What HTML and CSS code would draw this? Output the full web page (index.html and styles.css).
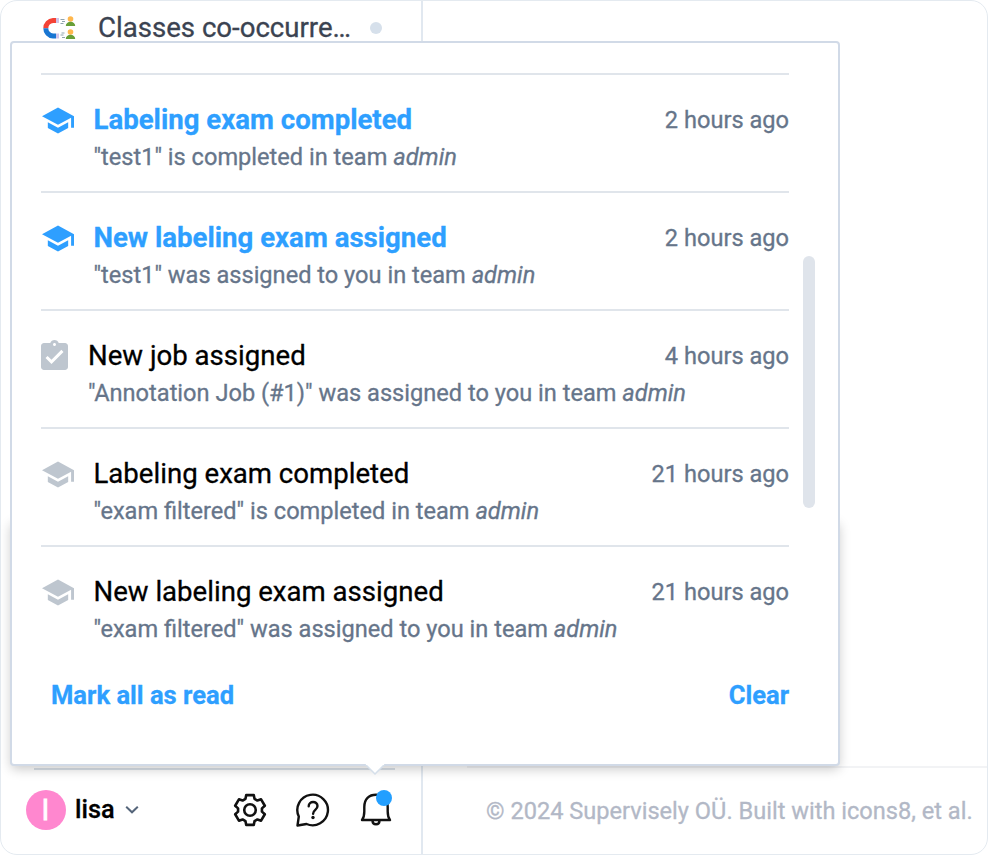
FILE: index.html
```html
<!DOCTYPE html>
<html lang="en">
<head>
<meta charset="utf-8">
<title>Notifications</title>
<link rel="stylesheet" href="styles.css">
</head>
<body>
<svg class="defs" width="0" height="0" aria-hidden="true">
  <symbol id="school" viewBox="1 3 22 18"><path d="M5 13.18v4L12 21l7-3.82v-4L12 17l-7-3.82zM12 3L1 9l11 6 9-4.91V17h2V9L12 3z"/></symbol>
  <symbol id="task" viewBox="3 1 18 20"><path d="M19 3h-4.18C14.4 1.84 13.3 1 12 1c-1.3 0-2.4.84-2.82 2H5c-1.1 0-2 .9-2 2v14c0 1.1.9 2 2 2h14c1.1 0 2-.9 2-2V5c0-1.1-.9-2-2-2zm-7 0c.55 0 1 .45 1 1s-.45 1-1 1-1-.45-1-1 .45-1 1-1zm-2 14l-4-4 1.41-1.41L10 14.17l6.59-6.59L18 9l-8 8z"/></symbol>
</svg>
<div class="frame">
  <aside class="sidebar">
    <div class="app">
      <svg class="app-icon" width="34" height="26" viewBox="0 0 34 26">
        <path d="M14 5.500H11A7.600 7.600 0 0 0 3.800 13.200" fill="none" stroke="#f44336" stroke-width="5"/>
        <path d="M14 21H11A7.600 7.600 0 0 1 3.800 13.200" fill="none" stroke="#1976d2" stroke-width="5"/>
        <path d="M14 3h3v5h-3zM14 18.500h3v5h-3z" fill="#d1c4e9"/>
        <path d="M18.500 4.500h4M20 6.500h3M18.500 8.500h3M19.500 18h3M18.500 20h3M20 22.500h3" stroke="#90a4ae" stroke-width="1"/>
        <circle cx="28.500" cy="4" r="2.800" fill="#ffb74d"/><circle cx="28.500" cy="17" r="2.800" fill="#ffb74d"/>
        <path d="M23.800 11a4.700 4.200 0 0 1 9.400 0zM23.800 24a4.700 4.200 0 0 1 9.400 0z" fill="#689f38"/>
      </svg>
      <span class="app-name">Classes co-occurre…</span>
      <span class="app-dot"></span>
    </div>
    <div class="user-bar">
      <span class="avatar">l</span>
      <span class="user-name">lisa</span>
      <svg class="chevron" width="14" height="10" viewBox="0 0 14 10"><path d="M1.200 1.800L7 7.300l5.800-5.500"/></svg>
      <svg class="tool gear" width="36" height="36" viewBox="-.7 -.7 37.4 37.4"><path d="M13.300 6.400L14.100 2.500h7.800L22.700 6.400L25.700 8.150L29.500 6.900L33.400 13.600L30.400 16.300V19.700L33.400 22.400L29.500 29.100L25.700 27.850L22.700 29.600L21.900 33.500H14.100L13.300 29.600L10.300 27.850L6.500 29.100L2.600 22.400L5.600 19.700V16.300L2.600 13.600L6.500 6.900L10.300 8.150z"/><circle cx="18" cy="18" r="6"/></svg>
      <svg class="tool help" width="36" height="36" viewBox="0 0 36 36"><path d="M2.500 33.500l1.300-9A15.300 15.300 0 1 1 11.500 32z"/><path d="M13.700 14.300c0-5.800 8.800-5.500 8.800-.3 0 4-4.400 3.800-4.400 7.800"/><circle class="solid" cx="18" cy="25.500" r="1.700"/></svg>
      <div class="bell">
        <svg class="tool" width="36" height="36" viewBox="0 0 36 36"><path d="M4 28c2-2.500 2.300-4.500 2.300-8.500V15C6.300 7 11 2.800 18 2.800S29.700 7 29.700 15v4.500c0 4 .3 6 2.300 8.500z"/><path d="M14.500 28.500c0 5 7 5 7 0"/></svg>
        <span class="badge"></span>
      </div>
    </div>
  </aside>
  <main class="content">
    <footer class="footer">© 2024 Supervisely OÜ. Built with icons8, et al.</footer>
  </main>
</div>
<div class="shade"></div>
<section class="popup">
  <div class="list">
    <article class="item unread">
      <svg class="icon"><use href="#school"/></svg>
      <div class="body"><div class="head"><h3>Labeling exam completed</h3><time>2 hours ago</time></div><p>"test1" is completed in team <em>admin</em></p></div>
    </article>
    <article class="item unread">
      <svg class="icon"><use href="#school"/></svg>
      <div class="body"><div class="head"><h3>New labeling exam assigned</h3><time>2 hours ago</time></div><p>"test1" was assigned to you in team <em>admin</em></p></div>
    </article>
    <article class="item">
      <svg class="icon task"><use href="#task"/></svg>
      <div class="body"><div class="head"><h3>New job assigned</h3><time>4 hours ago</time></div><p>"Annotation Job (#1)" was assigned to you in team <em>admin</em></p></div>
    </article>
    <article class="item">
      <svg class="icon"><use href="#school"/></svg>
      <div class="body"><div class="head"><h3>Labeling exam completed</h3><time>21 hours ago</time></div><p>"exam filtered" is completed in team <em>admin</em></p></div>
    </article>
    <article class="item">
      <svg class="icon"><use href="#school"/></svg>
      <div class="body"><div class="head"><h3>New labeling exam assigned</h3><time>21 hours ago</time></div><p>"exam filtered" was assigned to you in team <em>admin</em></p></div>
    </article>
  </div>
  <div class="actions"><a>Mark all as read</a><a>Clear</a></div>
  <span class="scrollbar"></span>
  <svg class="arrow" width="20" height="12" viewBox="0 0 20 12"><path d="M0 0L10 10L20 0" fill="#fff" stroke="#d5dfea" stroke-width="1.500"/><path d="M1 0h18v1H1z" fill="#fff"/></svg>
</section>
</body>
</html>
```

FILE: styles.css
```css
* { box-sizing: border-box; }
body { margin: 0; width: 988px; height: 855px; overflow: hidden; background: #fff; font-family: Roboto, "Liberation Sans", sans-serif; -webkit-text-stroke: .3px; }
.defs { position: absolute; }
.frame { display: flex; width: 988px; height: 855px; border: 1px solid #e4eaf0; border-radius: 17px; overflow: hidden; }
.sidebar { display: flex; flex-direction: column; justify-content: space-between; width: 422px; border-right: 2px solid #e1e8f0; }
.app { display: flex; align-items: center; height: 53px; padding-left: 41px; }
.app-name { margin-left: 22px; width: 253px; font-size: 27.6px; color: #3b4351; white-space: nowrap; }
.app-dot { width: 12px; height: 12px; margin-left: 19px; border-radius: 50%; background: #d6e0eb; }
.user-bar { display: flex; align-items: center; height: 86px; margin-left: 33px; margin-right: 26px; padding-bottom: 4px; border-top: 2px solid #d9e0e8; }
.avatar { display: flex; align-items: center; justify-content: center; width: 40px; height: 40px; margin-left: -8.500px; border-radius: 50%; background: #ff87cf; color: #fff; font-size: 28px; -webkit-text-stroke: 1px; }
.user-name { width: 41px; margin-left: 9.500px; padding-bottom: 2px; font-size: 25.3px; font-weight: 500; color: #000; }
.chevron { margin-left: 9px; fill: none; stroke: #55657a; stroke-width: 2; }
.tool { display: block; fill: none; stroke: #111; stroke-width: 2.400; stroke-linejoin: round; stroke-linecap: round; }
.tool .solid { fill: #111; stroke: none; }
.gear { margin-left: 93px; stroke-width: 2.700; }
.help { margin-left: 27px; }
.bell { position: relative; margin-left: 27px; }
.badge { position: absolute; left: 18px; top: -2px; width: 16px; height: 16px; border-radius: 50%; background: #239fff; }
.content { display: flex; flex: 1; flex-direction: column; justify-content: flex-end; }
.footer { height: 88px; margin-left: 44px; padding: 29px 0 0 19px; border-top: 2px solid #f2f3f5; font-size: 23.6px; line-height: 28px; color: #b2b8c6; white-space: nowrap; }
.shade { position: absolute; left: 11px; top: 520px; width: 828px; height: 245px; border-radius: 3px; box-shadow: 0 4px 12px rgba(0,0,0,.22); }
.popup { position: absolute; left: 10px; top: 41px; width: 830px; height: 725px; padding: 30px 49px 0 29px; border: 2px solid #d1dae7; border-radius: 4px; background: #fff; }
.item { display: flex; height: 118px; padding-top: 27px; border-top: 2px solid #e0e5eb; }
.icon { flex: none; width: 32px; height: 27px; margin: 5px 19.500px 0 1px; fill: #bec6cf; }
.icon.task { width: 27px; height: 30px; margin: 2px 20px 0 0; }
.unread .icon { fill: #2e9fff; }
.body { flex: 1; }
.head { display: flex; justify-content: space-between; height: 37px; }
h3 { margin: 0; font-size: 27.6px; line-height: 36px; font-weight: 400; color: #000; }
.unread h3 { font-weight: 700; color: #2e9fff; }
time { font-size: 23.6px; line-height: 36px; color: #66758a; }
p { margin: 0; font-size: 23.6px; line-height: 36px; color: #66758a; white-space: nowrap; }
.actions { display: flex; justify-content: space-between; padding: 14px 0 0 10px; font-size: 25.55px; line-height: 37px; font-weight: 700; color: #2e9fff; }
.scrollbar { position: absolute; left: 791px; top: 213px; width: 12px; height: 252px; border-radius: 6px; background: #dfe4eb; }
.arrow { position: absolute; left: 353px; top: 721px; }
```
